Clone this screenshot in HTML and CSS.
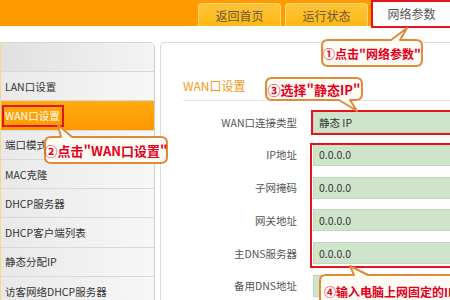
FILE: index.html
```html
<!DOCTYPE html>
<html lang="zh-CN">
<head>
<meta charset="utf-8">
<title>网络参数 - WAN口设置</title>
<link rel="stylesheet" href="styles.css">
</head>
<body>
<div class="page">
  <header class="topbar">
    <nav class="tabs">
      <div class="tab">返回首页</div>
      <div class="tab">运行状态</div>
      <div class="tab active">网络参数</div>
    </nav>
  </header>
  <main class="main">
    <aside class="sidebar">
      <div class="side-head"></div>
      <ul class="menu">
        <li>LAN口设置</li>
        <li class="current">WAN口设置</li>
        <li>端口模式</li>
        <li>MAC克隆</li>
        <li>DHCP服务器</li>
        <li>DHCP客户端列表</li>
        <li>静态分配IP</li>
        <li>访客网络DHCP服务器</li>
      </ul>
    </aside>
    <section class="panel">
      <h2 class="panel-title">WAN口设置</h2>
      <div class="form">
        <div class="row"><span class="label">WAN口连接类型</span><div class="field">静态 IP</div></div>
        <div class="row"><span class="label">IP地址</span><div class="field">0.0.0.0</div></div>
        <div class="row"><span class="label">子网掩码</span><div class="field">0.0.0.0</div></div>
        <div class="row"><span class="label">网关地址</span><div class="field">0.0.0.0</div></div>
        <div class="row"><span class="label">主DNS服务器</span><div class="field">0.0.0.0</div></div>
        <div class="row"><span class="label">备用DNS地址</span><div class="field">0.0.0.0</div></div>
      </div>
    </section>
  </main>

  <svg class="marks" width="450" height="300" viewBox="0 0 450 300">
    <rect x="372" y="1" width="80" height="26" class="redbox"/>
    <rect x="3" y="106" width="60" height="20" class="redbox"/>
    <rect x="312" y="111" width="142" height="23" class="redbox"/>
    <rect x="311" y="144" width="143" height="123" class="redbox"/>
    <path class="bubble" d="M328 40 H391 L407 28 L400 40 H416 Q422 40 422 46 V60 Q422 66 416 66 H328 Q322 66 322 60 V46 Q322 40 328 40 Z"/>
    <path class="bubble" d="M51 137 H61 L58 125 L72 137 H161 Q167 137 167 143 V157 Q167 163 161 163 H51 Q45 163 45 157 V143 Q45 137 51 137 Z"/>
    <path class="bubble" d="M272 78 H356 Q362 78 362 84 V94 Q362 100 356 100 H350 L357 111 L339 100 H272 Q266 100 266 94 V84 Q266 78 272 78 Z"/>
    <path class="bubble" d="M326 275 H354 L350 266 L368 275 H470 V320 H320 V281 Q320 275 326 275 Z"/>
  </svg>
  <div class="callout c1">①点击"网络参数"</div>
  <div class="callout c2">②点击"WAN口设置"</div>
  <div class="callout c3">③选择"静态IP"</div>
  <div class="callout c4">④输入电脑上网固定的IP地址</div>
</div>
</body>
</html>
```

FILE: styles.css
```css
* { box-sizing: border-box; }
html, body { margin: 0; padding: 0; }
body {
  width: 450px;
  height: 300px;
  overflow: hidden;
  background: #fff;
  font-family: "Noto Sans CJK SC", "Noto Sans", sans-serif;
  color: #333;
}
.page {
  position: relative;
  width: 450px;
  height: 300px;
  overflow: hidden;
}

/* top bar */
.topbar {
  height: 26px;
  background: #ff9a00;
  display: flex;
}
.tabs {
  display: flex;
  align-items: flex-end;
  gap: 4px;
  margin-left: 198px;
}
.tab {
  width: 83px;
  height: 23px;
  display: flex;
  align-items: center;
  justify-content: center;
  background: linear-gradient(#ffc43a, #ffb914);
  border: 1px solid #ffd77a;
  border-bottom: none;
  border-radius: 4px 4px 0 0;
  font-size: 12px;
  color: #6b5630;
}
.tab.active {
  width: 79px;
  height: 26px;
  background: #fff;
  border: none;
  border-radius: 0;
  color: #555;
  align-self: flex-start;
  padding-top: 1px;
}

/* main */
.main {
  display: flex;
  margin-top: 16px;
  gap: 5px;
  height: 274px;
}
.sidebar {
  width: 155px;
  flex: none;
  background: linear-gradient(90deg, #e9e9e9, #f7f7f7);
  border-top: 1px solid #d6d6d6;
  border-right: 1px solid #cfcfcf;
  border-left: 1px solid #f3d98a;
  border-radius: 0 5px 0 0;
}
.side-head {
  height: 29px;
  background: linear-gradient(90deg, #e0e0e0, #f4f4f4);
  border-bottom: 1px solid #d8d8d8;
}
.menu {
  list-style: none;
  margin: 0;
  padding: 0;
}
.menu li {
  height: 29.3px;
  display: flex;
  align-items: center;
  padding-left: 4px;
  font-size: 10.5px;
  color: #333;
  border-bottom: 1px solid #d9d9d9;
  white-space: nowrap;
}
.menu li.current {
  background: linear-gradient(#ffaa10, #ff9800);
  color: #fff;
}

.panel {
  flex: 1;
  border: 1px solid #dcdcdc;
  border-right: none;
  border-radius: 5px 0 0 0;
  padding: 33px 0 0 22px;
  min-width: 0;
}
.panel-title {
  margin: 0;
  font-size: 12px;
  font-weight: normal;
  color: #f39a1a;
  line-height: 20px;
  padding-bottom: 4px;
  border-bottom: 1px solid #e6e6e6;
}
.form {
  display: flex;
  flex-direction: column;
  gap: 10.8px;
  margin-top: 10px;
}
.row {
  display: flex;
  align-items: center;
  gap: 16px;
  height: 22px;
}
.label {
  width: 114px;
  flex: none;
  text-align: right;
  font-size: 10.5px;
  color: #555;
  white-space: nowrap;
}
.field {
  width: 200px;
  flex: none;
  height: 22px;
  background: #cfe5cb;
  border: 1px solid #c2d7be;
  font-size: 10.5px;
  color: #333;
  display: flex;
  align-items: center;
  padding-left: 5px;
}

/* annotations */
.marks {
  position: absolute;
  left: 0;
  top: 0;
  pointer-events: none;
}
.redbox {
  fill: none;
  stroke: #e5141d;
  stroke-width: 2;
}
.bubble {
  fill: #fffcf6;
  stroke: #e08a3c;
  stroke-width: 2;
  stroke-linejoin: round;
}
.callout {
  position: absolute;
  display: flex;
  align-items: center;
  justify-content: center;
  font-weight: bold;
  color: #e4001b;
  white-space: nowrap;
  font-size: 13px;
}
.c1 { left: 322px; top: 40px; width: 100px; height: 26px; font-size: 12px; }
.c2 { left: 45px; top: 137px; width: 122px; height: 26px; }
.c3 { left: 266px; top: 78px; width: 96px; height: 22px; }
.c4 { left: 324px; top: 281px; height: 20px; font-size: 12px; justify-content: flex-start; }
```
